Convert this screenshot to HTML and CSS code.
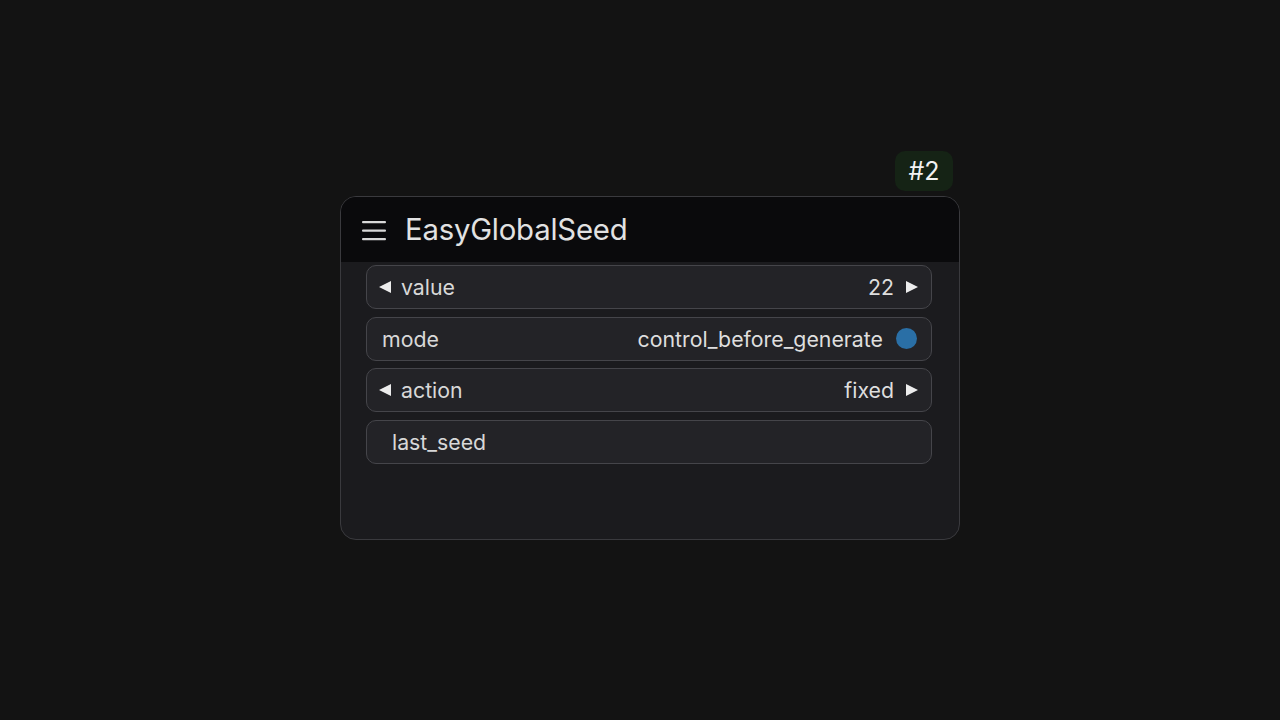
FILE: index.html
```html
<!DOCTYPE html>
<html>
<head>
<meta charset="utf-8">
<link rel="stylesheet" href="styles.css">
</head>
<body>
<div class="canvas">
  <div class="node">
    <div class="badge">#2</div>
    <div class="header">
      <svg class="menu" width="26" height="22" viewBox="0 0 26 22">
        <rect x="1" y="2" width="24" height="2.2" rx="1" fill="#d8d8d8"/>
        <rect x="1" y="10.5" width="24" height="2.2" rx="1" fill="#d8d8d8"/>
        <rect x="1" y="19" width="24" height="2.2" rx="1" fill="#d8d8d8"/>
      </svg>
      <span class="title">EasyGlobalSeed</span>
    </div>
    <div class="body">
      <div class="widget">
        <span class="arrow left"></span>
        <span class="label">value</span>
        <span class="value">22</span>
        <span class="arrow right"></span>
      </div>
      <div class="widget toggle">
        <span class="label">mode</span>
        <span class="value">control_before_generate</span>
        <span class="dot"></span>
      </div>
      <div class="widget">
        <span class="arrow left"></span>
        <span class="label">action</span>
        <span class="value">fixed</span>
        <span class="arrow right"></span>
      </div>
      <div class="widget button">
        <span class="label">last_seed</span>
      </div>
    </div>
  </div>
</div>
</body>
</html>
```

FILE: styles.css
```css
html, body {
  margin: 0;
  padding: 0;
  background: #131313;
  width: 1280px;
  height: 720px;
  overflow: hidden;
  font-family: Inter, "Noto Sans", sans-serif;
}
.canvas {
  display: flex;
  justify-content: center;
  padding-top: 196px;
  padding-left: 20px;
}
.node {
  position: relative;
  width: 620px;
  height: 344px;
  box-sizing: border-box;
  border: 1px solid #3a3a3e;
  border-radius: 16px;
  background: #1b1b1e;
}
.badge {
  position: absolute;
  right: 6px;
  top: -46px;
  width: 58px;
  height: 40px;
  border-radius: 10px;
  background: #152315;
  color: #f2f2f2;
  font-size: 25px;
  display: flex;
  align-items: center;
  justify-content: center;
}
.header {
  height: 65px;
  background: #0a0a0c;
  border-radius: 15px 15px 0 0;
  display: flex;
  align-items: center;
  padding-left: 20px;
}
.menu {
  margin-right: 18px;
  margin-top: 1px;
}
.title {
  color: #e2e2e2;
  font-size: 29.3px;
  letter-spacing: -0.2px;
}
.body {
  padding: 3px 27px 0 25px;
  display: flex;
  flex-direction: column;
  gap: 7.7px;
}
.widget {
  height: 44px;
  box-sizing: border-box;
  border: 1.5px solid #45454a;
  border-radius: 10px;
  background: #232327;
  display: flex;
  align-items: center;
  padding: 0 13px 0 12px;
  color: #d8d8d8;
  font-size: 21.3px;
}
.label {
  flex: 1;
}
.arrow.left + .label {
  margin-left: 10px;
}
.value {
  color: #dedede;
  margin-right: 12px;
}
.arrow {
  width: 0;
  height: 0;
  border-top: 6.5px solid transparent;
  border-bottom: 6.5px solid transparent;
}
.arrow.left {
  border-right: 12px solid #ececec;
}
.arrow.right {
  border-left: 12px solid #ececec;
}
.toggle {
  padding-left: 15px;
  padding-right: 14px;
}
.toggle .value {
  margin-right: 13px;
}
.dot {
  width: 21px;
  height: 21px;
  border-radius: 50%;
  background: #2a6fa6;
}
.button {
  padding-left: 25px;
}
```
